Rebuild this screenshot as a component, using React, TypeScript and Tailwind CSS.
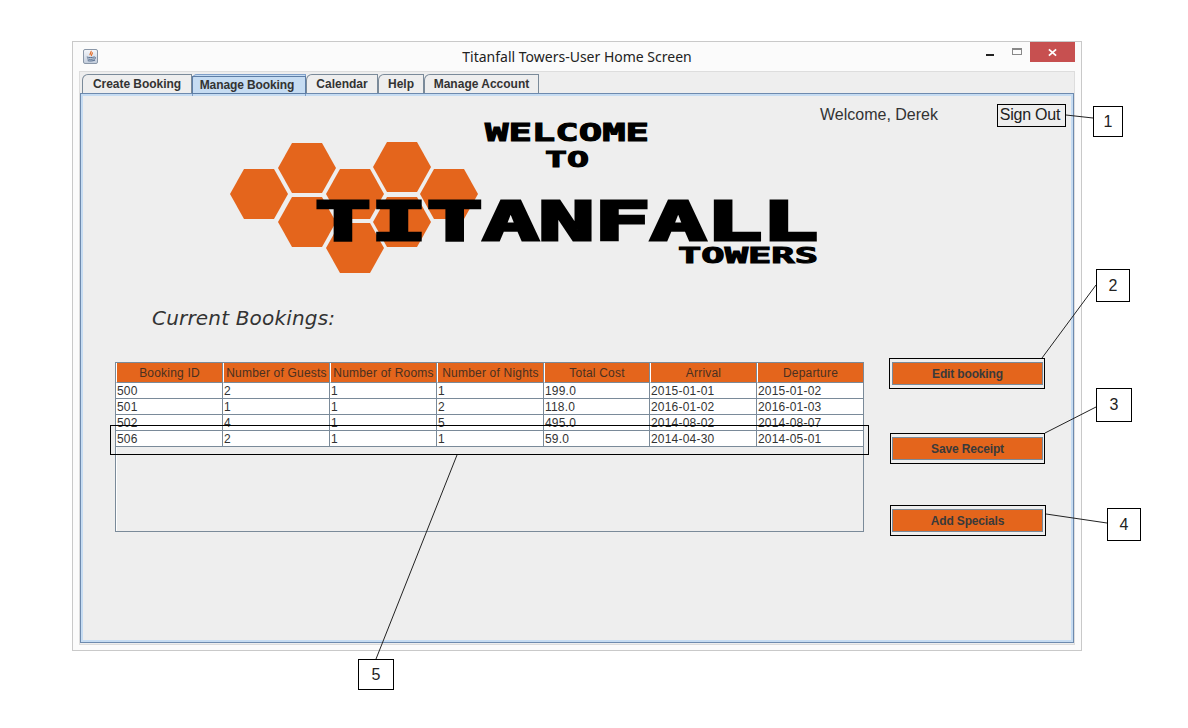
import React from "react";

const ORANGE = "#e4651c";

const columns = [
  "Booking ID",
  "Number of Guests",
  "Number of Rooms",
  "Number of Nights",
  "Total Cost",
  "Arrival",
  "Departure",
];

const rows = [
  ["500", "2", "1", "1", "199.0", "2015-01-01", "2015-01-02"],
  ["501", "1", "1", "2", "118.0", "2016-01-02", "2016-01-03"],
  ["502", "4", "1", "5", "495.0", "2014-08-02", "2014-08-07"],
  ["506", "2", "1", "1", "59.0", "2014-04-30", "2014-05-01"],
];

const tabs = ["Create Booking", "Manage Booking", "Calendar", "Help", "Manage Account"];
const tabWidths = ["w-[110px]", "w-[114px]", "w-[72px]", "w-[46px]", "w-[115px]"];

const hexCentres = [
  [259, 194],
  [307, 168],
  [355, 194],
  [402, 167],
  [449, 194],
  [307, 222],
  [402, 222],
  [355, 248],
];

function hexPoints(cx: number, cy: number) {
  return [
    [cx - 29, cy],
    [cx - 15, cy - 25],
    [cx + 15, cy - 25],
    [cx + 29, cy],
    [cx + 15, cy + 25],
    [cx - 15, cy + 25],
  ]
    .map((p) => p.join(","))
    .join(" ");
}

function Logo() {
  // viewBox uses page coordinates so the hexes read straight off the screenshot
  const font = { fontFamily: "'DejaVu Sans Mono', monospace", fontWeight: 700 };
  return (
    <svg viewBox="225 118 595 160" className="block w-[595px] h-[160px] shrink-0">
      {hexCentres.map(([x, y]) => (
        <polygon key={`${x}-${y}`} points={hexPoints(x, y)} fill={ORANGE} />
      ))}
      <text x="485" y="141" textLength="164" lengthAdjust="spacingAndGlyphs" fontSize="24" stroke="#000" strokeWidth="1" style={font}>
        WELCOME
      </text>
      <text x="545" y="167" textLength="44" lengthAdjust="spacingAndGlyphs" fontSize="21" stroke="#000" strokeWidth="1" style={font}>
        TO
      </text>
      <text x="315" y="239.5" textLength="503" lengthAdjust="spacingAndGlyphs" fontSize="53" stroke="#000" strokeWidth="3" style={font}>
        TITANFALL
      </text>
      <text x="678" y="262.5" textLength="140" lengthAdjust="spacingAndGlyphs" fontSize="21" stroke="#000" strokeWidth="1" style={font}>
        TOWERS
      </text>
    </svg>
  );
}

function JavaIcon() {
  return (
    <div className="w-[15px] h-[15px] rounded-[2px] border border-[#8a97a8] bg-gradient-to-b from-[#f4f6fa] to-[#c4cedd] flex items-center justify-center">
      <svg viewBox="0 0 14 14" className="w-[13px] h-[13px]">
        <path d="M7.5 1C8.5 2.5 6 3.5 6.5 5.5M9 2.5C9.5 4 7.5 5 8 6.5" fill="none" stroke="#e4651c" strokeWidth="1.2" />
        <path d="M3 7.5c2 .8 6 .8 8 0M3.5 9.5c2 .7 5 .7 7 0M4 11.5c2 .5 5 .5 8-.6M11 7.5c2 0 2 2-.5 2.5" fill="none" stroke="#4a6285" strokeWidth="1" />
      </svg>
    </div>
  );
}

function TitleBar() {
  return (
    <div className="relative h-[29px] flex items-center justify-center">
      <div className="absolute left-[10px] top-[7px]">
        <JavaIcon />
      </div>
      <span className="text-[14px] text-[#222] font-['Noto_Sans',sans-serif]">
        Titanfall Towers-User Home Screen
      </span>
      <div className="absolute right-[6px] top-0 flex items-start">
        <div className="w-[8px] h-[2px] bg-[#222] mt-[12px] mr-[18px]" />
        <div className="w-[10px] h-[7px] border border-[#888] border-t-2 mt-[6px] mr-[8px]" />
        <div className="w-[45px] h-[20px] bg-[#c75050] flex items-center justify-center">
          <svg viewBox="0 0 10 10" className="w-[9px] h-[9px]">
            <path d="M1 1.5 9 8.5M9 1.5 1 8.5" stroke="#fff" strokeWidth="2" />
          </svg>
        </div>
      </div>
    </div>
  );
}

function TabBar() {
  return (
    <div className="flex h-[21px] items-start pl-[2px] pt-[2px]">
      {tabs.map((t, i) =>
        i === 1 ? (
          <div
            key={t}
            className={`${tabWidths[i]} h-[22px] relative z-10 border-t border-x border-[#7f9fc8] rounded-tl-[5px] bg-[#c6dcf2] pt-px`}
          >
            <div className="h-[18px] pr-[4px] pb-px -mx-px border border-[#5e7ea6] flex items-center justify-center text-[12px] font-bold text-[#333] tracking-[-0.1px]">
              {t}
            </div>
          </div>
        ) : (
          <div
            key={t}
            className={`${tabWidths[i]} h-[19px] flex items-center justify-center text-[12px] font-bold text-[#333] ${
              i === 0 ? "tracking-[-0.05px]" : ""
            } border border-b-0 border-[#7a8a99] rounded-tl-[6px] bg-[#eeeeee]`}
          >
            {t}
          </div>
        )
      )}
    </div>
  );
}

function BookingTable() {
  return (
    <div className="w-[749px] h-[170px] border border-[#7a8a99] shadow-[inset_1px_0_0_#ffffff] shrink-0">
      <div className="grid grid-cols-[107px_107px_107px_107px_106px_107px_106px]">
        {columns.map((c, i) => (
          <div
            key={c}
            className={`h-[20px] pt-px flex items-center justify-center whitespace-nowrap text-[12px] tracking-[0.2px] text-[#4a3020] border-b border-[#7a8a99] border-l-[1px] border-l-white ${
              i < 6 ? "border-r" : ""
            }`}
            style={{ backgroundColor: ORANGE }}
          >
            {c}
          </div>
        ))}
        {rows.map((row) =>
          row.map((v, i) => (
            <div
              key={`${row[0]}-${i}`}
              className={`h-[16px] pl-px leading-[17px] text-[12px] tracking-[0.2px] text-[#333] bg-white border-b border-[#7a8a99] ${
                i < 6 ? "border-r" : ""
              }`}
            >
              {v}
            </div>
          ))
        )}
      </div>
    </div>
  );
}

function ActionButton({ label, className }: { label: string; className: string }) {
  return (
    <div className={`border border-black flex items-center ${className}`}>
      <div
        className="w-[151px] h-[23px] border border-[#7a8a99] flex items-center justify-center text-[12px] font-bold text-[#3a3a3a] tracking-[-0.15px]"
        style={{ backgroundColor: ORANGE }}
      >
        {label}
      </div>
    </div>
  );
}

function Callout({ n, className }: { n: number; className: string }) {
  return (
    <div
      className={`absolute bg-white border border-black flex items-center justify-center text-[16px] text-[#222] ${className}`}
    >
      {n}
    </div>
  );
}

function Annotations() {
  return (
    <>
      <div className="absolute left-[110px] top-[425px] w-[759px] h-[30px] border border-black" />
      <svg className="absolute left-0 top-0 w-[1188px] h-[728px] pointer-events-none" viewBox="0 0 1188 728">
        <g stroke="#222" strokeWidth="1" fill="none">
          <line x1="1066" y1="115" x2="1093" y2="118" />
          <line x1="1096" y1="285" x2="1042" y2="358" />
          <line x1="1096" y1="407" x2="1045" y2="433" />
          <line x1="1046" y1="514" x2="1107" y2="523" />
          <line x1="376" y1="659" x2="457" y2="455" />
        </g>
      </svg>
      <Callout n={1} className="left-[1093px] top-[106px] w-[30px] h-[31px]" />
      <Callout n={2} className="left-[1096px] top-[269px] w-[34px] h-[33px]" />
      <Callout n={3} className="left-[1096px] top-[388px] w-[36px] h-[34px]" />
      <Callout n={4} className="left-[1107px] top-[508px] w-[34px] h-[33px]" />
      <Callout n={5} className="left-[358px] top-[659px] w-[36px] h-[31px]" />
    </>
  );
}

export default function App() {
  return (
    <div className="relative w-[1188px] h-[728px] bg-white pl-[72px] pt-[41px] font-['Liberation_Sans',Arial,sans-serif]">
      <div className="w-[1010px] h-[610px] border border-[#c9c9c9] bg-[#fbfbfb] flex flex-col">
        <TitleBar />
        <div className="mx-[6px] h-[574px] border border-[#dddddd] bg-[#eeeeee] flex flex-col">
          <TabBar />
          <div className="h-[550px] border border-[#6d8aae]">
            <div className="h-full border-2 border-[#c6dcf2]">
              <div className="flex items-start">
                <div className="ml-[142px] mt-[22px]">
                  <Logo />
                </div>
                <span className="mt-[7px] text-[16px] text-[#333] whitespace-nowrap">Welcome, Derek</span>
                <div className="ml-[59px] mt-[8px] w-[69px] h-[23px] pb-px pr-[3px] border border-black flex items-center justify-center text-[16px] tracking-[-0.25px] text-[#222] whitespace-nowrap">
                  Sign Out
                </div>
              </div>
              <div className="ml-[69px] mt-[26px] h-[28px] text-[20px] leading-[28px] tracking-[0.18px] italic text-[#333] font-['DejaVu_Sans',sans-serif]">
                Current Bookings:
              </div>
              <div className="flex items-start ml-[32px] mt-[30px]">
                <BookingTable />
                <div className="flex flex-col items-start -mt-[4px]">
                  <ActionButton label="Edit booking" className="ml-[25px] pl-[2px] w-[156px] h-[31px]" />
                  <ActionButton label="Save Receipt" className="ml-[26px] mt-[44px] pl-px w-[155px] h-[31px]" />
                  <ActionButton label="Add Specials" className="ml-[26px] mt-[41px] pl-px w-[156px] h-[31px]" />
                </div>
              </div>
            </div>
          </div>
        </div>
      </div>
      <Annotations />
    </div>
  );
}
